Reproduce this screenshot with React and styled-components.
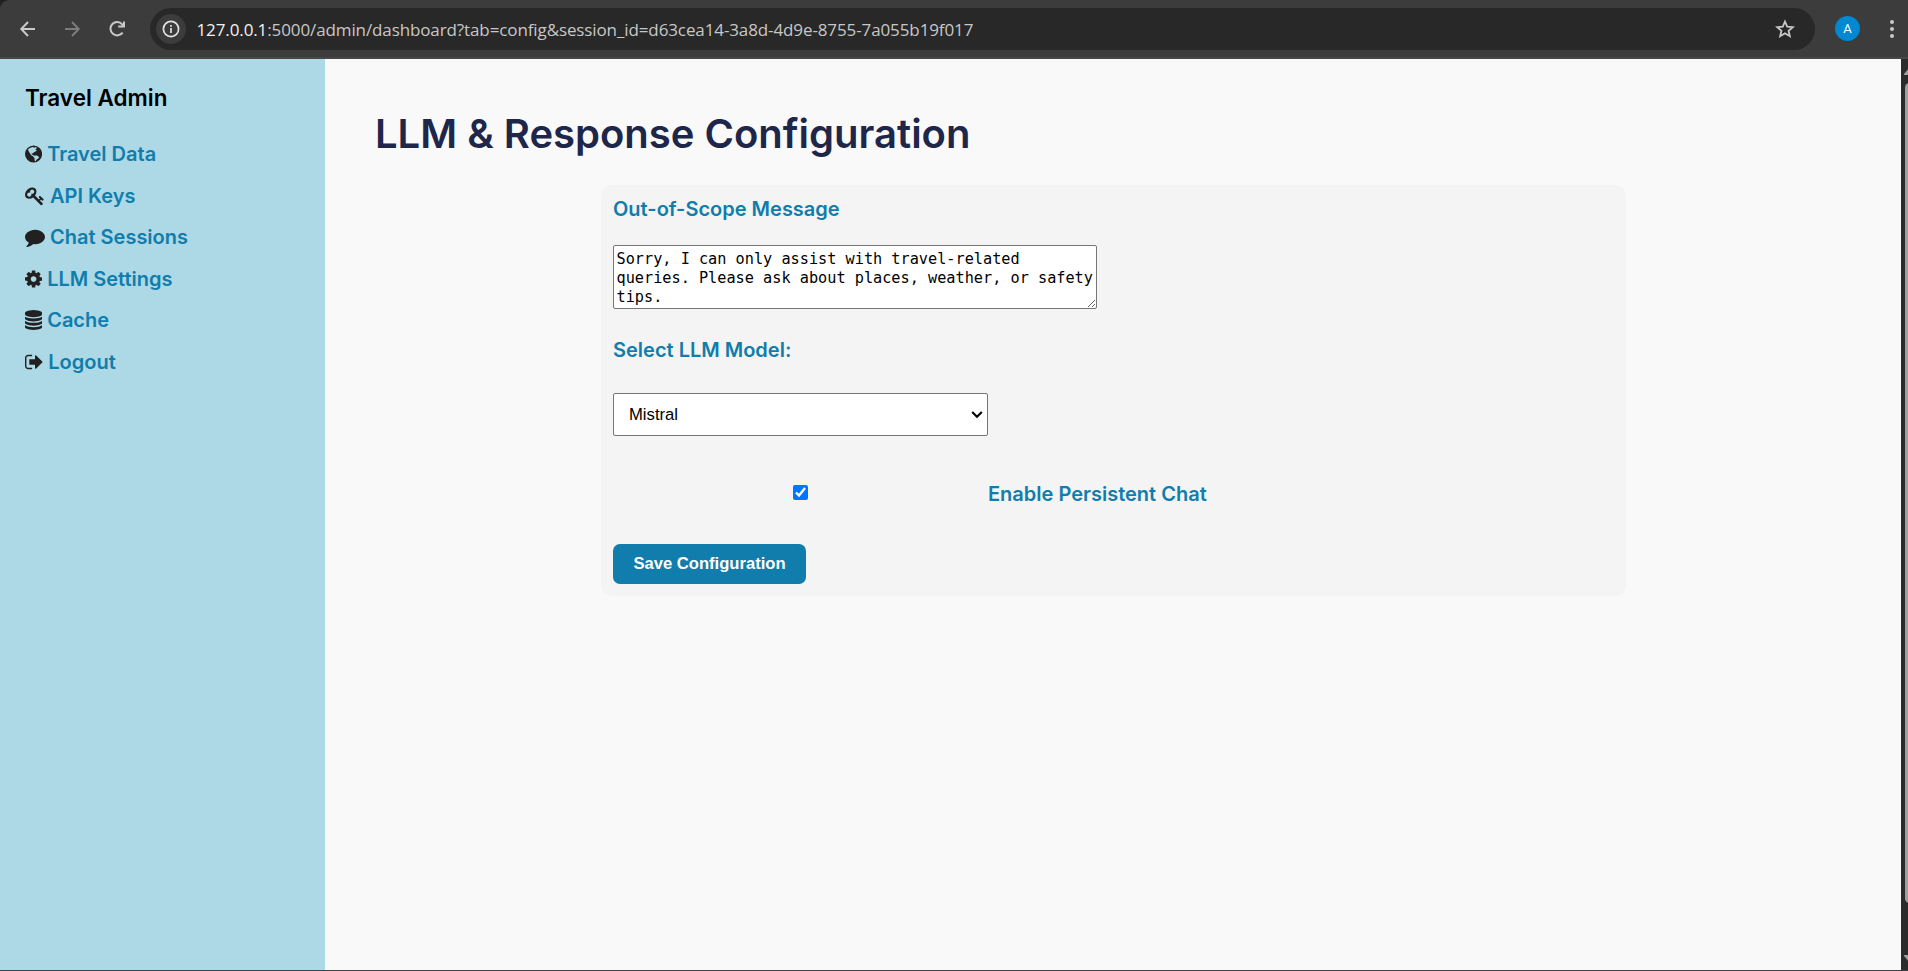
import React from "react";
import styled, { createGlobalStyle } from "styled-components";

const Global = createGlobalStyle`
  *, *::before, *::after { box-sizing: border-box; }
  html, body { margin: 0; padding: 0; overflow: hidden; }
  body { font-family: Inter, "Liberation Sans", sans-serif; background: #f9f9f9; }
`;

const Window = styled.div`
  width: 1908px;
  height: 971px;
  display: flex;
  flex-direction: column;
  overflow: hidden;
  background: #202020;
  border-bottom: 1px solid #3c4447;
`;

const Toolbar = styled.header`
  height: 59px;
  flex: none;
  display: flex;
  align-items: flex-start;
  padding: 8px 0 0 16px;
  background: #3c3c3c;
  border-bottom: 2px solid #474747;
  border-top-left-radius: 9px;
`;

const ToolButton = styled.div`
  width: 24px;
  height: 42px;
  margin-right: ${(p) => p.$gap}px;
  display: flex;
  align-items: center;
  justify-content: center;
  color: ${(p) => (p.$dim ? "#7c7c7c" : "#c9c9c9")};
`;

const AddressBar = styled.div`
  width: 1665px;
  height: 42px;
  display: flex;
  align-items: center;
  padding: 0 18px 0 6px;
  border-radius: 21px;
  background: #282828;
`;

const InfoBadge = styled.span`
  width: 30px;
  height: 30px;
  margin-right: 10.5px;
  display: flex;
  align-items: center;
  justify-content: center;
  border-radius: 50%;
  background: #3c3c3c;
  color: #e3e3e3;
`;

const Url = styled.span`
  flex: 1;
  padding-top: 2px;
  font: 400 17px/24px "Open Sans", "Noto Sans", sans-serif;
  letter-spacing: -0.11px;
  white-space: nowrap;
  color: #c7c7c7;
`;

const Host = styled.span`
  color: #f2f2f2;
`;

const Avatar = styled.div`
  width: 25px;
  height: 25px;
  margin: 8px 28px 0 20px;
  display: flex;
  align-items: center;
  justify-content: center;
  border-radius: 50%;
  background: #0288d1;
  color: #fff;
  font: 400 13px/25px Roboto, sans-serif;
`;

const Body = styled.div`
  flex: 1;
  min-height: 0;
  display: flex;
`;

const Sidebar = styled.nav`
  width: 325px;
  flex: none;
  padding: 25px;
  background: #add8e6;
`;

const Brand = styled.div`
  margin-bottom: 30px;
  font-size: 22.5px;
  line-height: 28px;
  font-weight: 600;
  color: #000;
`;

const NavItem = styled.a`
  height: 24px;
  margin-bottom: 17.5px;
  display: flex;
  align-items: center;
  gap: 5px;
  font-size: 20px;
  line-height: 24px;
  font-weight: 600;
  color: #107dac;

  svg { flex: none; fill: #212121; }
`;

const Content = styled.main`
  flex: 1;
  padding: 50px;
  background: #f9f9f9;
`;

const Title = styled.h1`
  margin: 0 0 27px;
  font-size: 40px;
  line-height: 49px;
  font-weight: 600;
  color: #1e2749;
`;

const Card = styled.form`
  width: 1025px;
  height: 411px;
  margin-left: 226px;
  padding: 12px;
  display: flex;
  flex-direction: column;
  align-items: flex-start;
  border-radius: 10px;
  background: #f4f4f4;
`;

const Label = styled.label`
  font-size: 20px;
  line-height: 24px;
  font-weight: 600;
  color: #107dac;
`;

const Message = styled.textarea`
  flex: none;
  width: 484px;
  height: 64px;
  margin: 24px 0 29px;
  padding: 4px 0 0 2.5px;
  border: 1px solid #767676;
  border-radius: 2px;
  background: #fff;
  color: #000;
  font: 400 15.22px/19px "DejaVu Sans Mono", monospace;
  overflow: hidden;
  resize: both;
`;

const SelectWrap = styled.div`
  position: relative;
  flex: none;
  height: 43px;
  margin: 31px 0 46px;

  svg {
    position: absolute;
    top: 17px;
    right: 5px;
    pointer-events: none;
  }
`;

const Select = styled.select`
  appearance: none;
  display: block;
  width: 375px;
  height: 43px;
  padding: 1px 15px 0;
  border: 1px solid #767676;
  border-radius: 2px;
  background: #fff;
  color: #000;
  font: 400 16.67px/20px "Liberation Sans", Arial, sans-serif;
`;

const CheckRow = styled.div`
  display: flex;
  align-items: center;
  margin-bottom: 38px;
`;

const Checkbox = styled.input`
  width: 375px;
  height: 15px;
  margin: 0 0 3px;
`;

const SaveButton = styled.button`
  flex: none;
  width: 193px;
  height: 40px;
  padding: 0;
  border: 0;
  border-radius: 7px;
  background: #107dac;
  color: #fff;
  font: 700 16.6px/20px "Liberation Sans", Arial, sans-serif;
`;

const ScrollTrack = styled.div`
  width: 7px;
  flex: none;
  overflow: hidden;
  padding: 9px 0 7px 3px;
  display: flex;
  flex-direction: column;
  background: #2b2b2b;

  svg { flex: none; fill: #9f9f9f; }
`;

const ScrollThumb = styled.div`
  width: 9px;
  height: 820px;
  margin: 8px 0 52px 1px;
  border-radius: 5px;
  background: #9f9f9f;
`;

const NAV = [
  { label: "Travel Data", width: 1536, d: "M768 128a768 768 0 1 0 0 1536a768 768 0 1 0 0-1536zM270 470L480 330L700 270L820 340L960 260L1080 360L920 470L1070 570L900 690L780 760L700 850L590 830L620 950L760 1000L860 1050L1020 1010L1270 1160L1190 1310L1040 1400L950 1560L860 1450L850 1260L740 1120L560 1000L440 820L330 640Z" },
  { label: "API Keys", width: 1792, d: "M832 512q0-80-56-136t-136-56-136 56-56 136q0 42 19 83-41-19-83-19-80 0-136 56t-56 136 56 136 136 56 136-56 56-136q0-42-19-83 41 19 83 19 80 0 136-56t56-136zm851 704q0 17-49 66t-66 49q-9 0-28.5-16t-36.5-33-38.5-40-24.5-26l-96 96 220 220q28 28 28 68 0 42-39 81t-81 39q-40 0-68-28l-671-671q-176 131-365 131-163 0-265.5-102.5t-102.5-265.5q0-160 95-313t248-248 313-95q163 0 265.5 102.5t102.5 265.5q0 189-131 365l355 355 96-96q-3-3-26-24.5t-40-38.5-33-36.5-16-28.5q0-17 49-66t66-49q13 0 23 10 6 6 46 44.5t82 79.5 86.5 86 73 78 28.5 41z" },
  { label: "Chat Sessions", width: 1792, d: "M1792 896q0 174-120 321.5t-326 233-450 85.5q-70 0-145-8-198 175-460 242-49 14-114 22-17 2-30.5-9t-17.5-29v-1q-3-4-.5-12t2-10 4.5-9.5l6-9 7-8.5 8-9q7-8 31-34.5t34.5-38 31-39.5 32.5-51 27-59 26-76q-157-89-247.5-220t-90.5-281q0-130 71-248.5t191-204.5 286-136.5 348-50.5q244 0 450 85.5t326 233 120 321.5z" },
  { label: "LLM Settings", x: 128, width: 1536, d: "M1152 896q0-106-75-181t-181-75-181 75-75 181 75 181 181 75 181-75 75-181zm512-109v222q0 12-8 23t-20 13l-185 28q-19 54-39 91 35 50 107 138 10 12 10 25t-9 23q-27 37-99 108t-94 71q-12 0-26-9l-138-108q-44 23-91 38-16 136-29 186-7 28-36 28h-222q-14 0-24.5-8.5t-11.5-21.5l-28-184q-49-16-90-37l-141 107q-10 9-25 9-14 0-25-11-126-114-165-168-7-10-7-23 0-12 8-23 15-21 51-66.5t54-70.5q-27-50-41-99l-183-27q-13-2-21-12.5t-8-23.5v-222q0-12 8-23t19-13l186-28q14-46 39-92-40-57-107-138-10-12-10-24 0-10 9-23 26-36 98.5-107.5t94.5-71.5q13 0 26 10l138 107q44-23 91-38 16-136 29-186 7-28 36-28h222q14 0 24.5 8.5t11.5 21.5l28 184q49 16 90 37l142-107q9-9 24-9 13 0 25 10 129 119 165 170 7 8 7 22 0 12-8 23-15 21-51 66.5t-54 70.5q26 50 41 98l183 28q13 2 21 12.5t8 23.5z" },
  { label: "Cache", x: 128, width: 1536, d: "M896 768q237 0 443-43t325-127v170q0 69-103 128t-280 93.5-385 34.5-385-34.5-280-93.5-103-128v-170q119 84 325 127t443 43zm0 768q237 0 443-43t325-127v170q0 69-103 128t-280 93.5-385 34.5-385-34.5-280-93.5-103-128v-170q119 84 325 127t443 43zm0-384q237 0 443-43t325-127v170q0 69-103 128t-280 93.5-385 34.5-385-34.5-280-93.5-103-128v-170q119 84 325 127t443 43zm0-1152q208 0 385 34.5t280 93.5 103 128v128q0 69-103 128t-280 93.5-385 34.5-385-34.5-280-93.5-103-128v-128q0-69 103-128t280-93.5 385-34.5z" },
  { label: "Logout", x: 64, width: 1640, d: "M704 1440q0 4 1 20t.5 26.5-3 23.5-10 19.5-20.5 6.5h-320q-119 0-203.5-84.5t-84.5-203.5v-704q0-119 84.5-203.5t203.5-84.5h320q13 0 22.5 9.5t9.5 22.5q0 4 1 20t.5 26.5-3 23.5-10 19.5-20.5 6.5h-320q-66 0-113 47t-47 113v704q0 66 47 113t113 47h312l11.5 1 11.5 3 8 5.5 7 9 2 13.5zm928-544q0 26-19 45l-544 544q-19 19-45 19t-45-19-19-45v-288h-448q-26 0-45-19t-19-45v-384q0-26 19-45t45-19h448v-288q0-26 19-45t45-19 45 19l544 544q19 19 19 45z" },
];

function NavIcon({ x = 0, width, d }) {
  return (
    <svg width={width / 89.6} height="20" viewBox={`${x} 0 ${width} 1792`}>
      <path fillRule="evenodd" d={d} />
    </svg>
  );
}

function Line({ d, size = 20, width = 2 }) {
  return (
    <svg width={size} height={size} viewBox="0 0 20 20" fill="none" stroke="currentColor" strokeWidth={width}>
      <path d={d} />
    </svg>
  );
}

export default function App() {
  return (
    <>
      <Global />
      <Window>
        <Toolbar>
          <ToolButton $gap={20}><Line d="M17 10H4M10 3L3.3 10L10 17" /></ToolButton>
          <ToolButton $dim $gap={21}><Line d="M3 10H16M10 3L16.7 10L10 17" /></ToolButton>
          <ToolButton $gap={21}><Line d="M15.6 13.6A6.7 6.7 0 1 1 15.2 5.3L16.6 7M17 2.5V7.6H11.2" /></ToolButton>
          <AddressBar>
            <InfoBadge>
              <svg width="18" height="18" viewBox="0 0 18 18" fill="none" stroke="currentColor" strokeWidth="1.7">
                <circle cx="9" cy="9" r="7.6" />
                <path d="M9 8V13M9 5V6.8" />
              </svg>
            </InfoBadge>
            <Url><Host>127.0.0.1</Host>:5000/admin/dashboard?tab=config&amp;session_id=d63cea14-3a8d-4d9e-8755-7a055b19f017</Url>
            <svg width="24" height="24" viewBox="0 0 24 24" fill="none" stroke="#c9c9c9" strokeWidth="1.8">
              <path d="M12 4.5L14.2 9.6L19.8 10.1L15.6 13.8L16.8 19.2L12 16.3L7.2 19.2L8.4 13.8L4.2 10.1L9.8 9.6Z" />
            </svg>
          </AddressBar>
          <Avatar>A</Avatar>
          <svg width="8" height="42" viewBox="0 0 8 42" fill="#c9c9c9">
            <circle cx="4" cy="14" r="2" /><circle cx="4" cy="21" r="2" /><circle cx="4" cy="28" r="2" />
          </svg>
        </Toolbar>
        <Body>
          <Sidebar>
            <Brand>Travel Admin</Brand>
            {NAV.map(({ label, ...icon }) => (
              <NavItem key={label}><NavIcon {...icon} />{label}</NavItem>
            ))}
          </Sidebar>
          <Content>
            <Title>LLM &amp; Response Configuration</Title>
            <Card>
              <Label>Out-of-Scope Message</Label>
              <Message defaultValue="Sorry, I can only assist with travel-related queries. Please ask about places, weather, or safety tips." />
              <Label>Select LLM Model:</Label>
              <SelectWrap>
                <Select defaultValue="Mistral"><option>Mistral</option></Select>
                <svg width="12" height="10" viewBox="0 0 12 10" fill="none" stroke="#000" strokeWidth="2.1">
                  <path d="M1.2 2L6 6.8L10.8 2" />
                </svg>
              </SelectWrap>
              <CheckRow>
                <Checkbox type="checkbox" defaultChecked />
                <Label>Enable Persistent Chat</Label>
              </CheckRow>
              <SaveButton type="button">Save Configuration</SaveButton>
            </Card>
          </Content>
          <ScrollTrack>
            <svg width="12" height="7" viewBox="0 0 12 7"><path d="M0 6L5 0H7L12 6V7H0Z" /></svg>
            <ScrollThumb />
            <svg width="12" height="7" viewBox="0 0 12 7"><path d="M0 0H12V1L7 7H5L0 1Z" /></svg>
          </ScrollTrack>
        </Body>
      </Window>
    </>
  );
}
